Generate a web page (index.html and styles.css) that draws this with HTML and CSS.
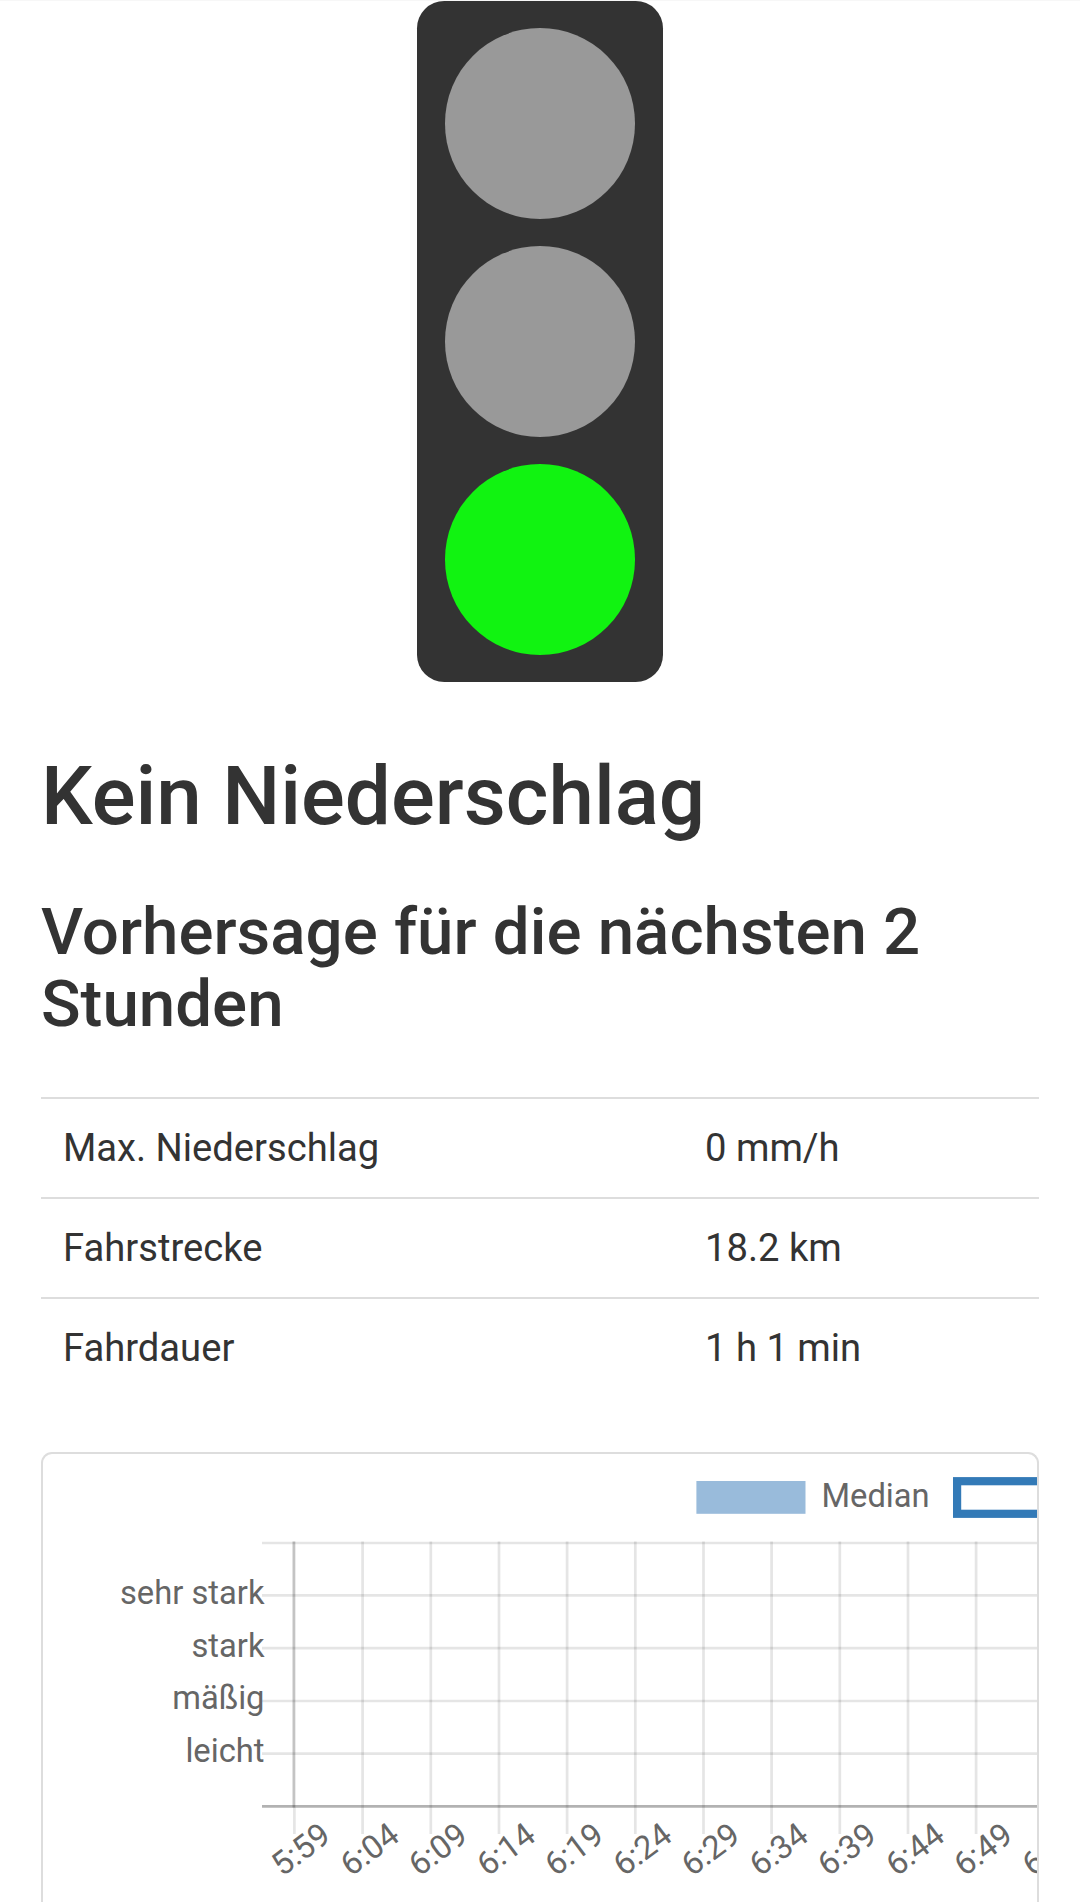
FILE: index.html
```
<!DOCTYPE html>
<html lang="de">
  <head>
    <meta charset="UTF-8" />
    <meta name="viewport" content="width=device-width, initial-scale=1.0" />
    <title>Kein Niederschlag</title>
    <link rel="stylesheet" href="styles.css">
  </head>
  <body>
    <div class="container">
      <div class="traffic-light">
        <div class="light"></div>
        <div class="light"></div>
        <div class="light green"></div>
      </div>

      <h1>Kein Niederschlag</h1>
      <h2>Vorhersage für die nächsten 2 Stunden</h2>

      <table class="table">
        <tr>
          <td class="label">Max. Niederschlag</td>
          <td>0 mm/h</td>
        </tr>
        <tr>
          <td class="label">Fahrstrecke</td>
          <td>18.2 km</td>
        </tr>
        <tr>
          <td class="label">Fahrdauer</td>
          <td>1 h 1 min</td>
        </tr>
      </table>

      <div class="chart-box">
        <svg class="chart" width="994" height="448" viewBox="43 1454 994 448">
          <!-- legend -->
          <rect class="median" x="696.4" y="1481" width="109.1" height="32.8" />
          <text x="821.5" y="1507">Median</text>
          <rect class="range" x="957.1" y="1481.2" width="109.1" height="32.6" />

          <!-- grid -->
          <path class="grid" d="M262 1543H1038M262 1595.4H1038M262 1648.2H1038M262 1701H1038M262 1753.6H1038" />
          <path class="grid" d="M294.4 1541.5V1834M362.6 1541.5V1834M430.8 1541.5V1834M499 1541.5V1834M567.1 1541.5V1834M635.3 1541.5V1834M703.5 1541.5V1834M771.6 1541.5V1834M839.8 1541.5V1834M908 1541.5V1834M976.1 1541.5V1834" />
          <path class="axis-y" d="M293.6 1541.5V1807.5" />
          <path class="axis-x" d="M262 1806.4H1038" />

          <!-- y axis -->
          <g class="y-labels">
            <text x="264.5" y="1604">sehr stark</text>
            <text x="264.5" y="1656.5">stark</text>
            <text x="264.5" y="1709">mäßig</text>
            <text x="264.5" y="1761.5">leicht</text>
          </g>

          <!-- x axis -->
          <g class="x-labels">
            <text transform="translate(300.4 1849) rotate(-37)" y="11.6">5:59</text>
            <text transform="translate(369.2 1849) rotate(-37)" y="11.6">6:04</text>
            <text transform="translate(437.4 1849) rotate(-37)" y="11.6">6:09</text>
            <text transform="translate(505.6 1849) rotate(-37)" y="11.6">6:14</text>
            <text transform="translate(573.7 1849) rotate(-37)" y="11.6">6:19</text>
            <text transform="translate(641.9 1849) rotate(-37)" y="11.6">6:24</text>
            <text transform="translate(710.1 1849) rotate(-37)" y="11.6">6:29</text>
            <text transform="translate(778.2 1849) rotate(-37)" y="11.6">6:34</text>
            <text transform="translate(846.4 1849) rotate(-37)" y="11.6">6:39</text>
            <text transform="translate(914.6 1849) rotate(-37)" y="11.6">6:44</text>
            <text transform="translate(982.7 1849) rotate(-37)" y="11.6">6:49</text>
            <text transform="translate(1050.9 1849) rotate(-37)" y="11.6">6:54</text>
          </g>
        </svg>
      </div>
    </div>
  </body>
</html>
```
FILE: styles.css
```
* {
  box-sizing: border-box;
}

body {
  margin: 0;
  border-top: 1px solid #f7f7f7;
  font-family: Roboto, Arial, sans-serif;
  font-size: 38.18px;
  line-height: 54.5px;
  color: #333;
  background-color: #fff;
}

.container {
  padding: 0 41px;
}

.traffic-light {
  display: flex;
  flex-direction: column;
  gap: 27.3px;
  width: 246px;
  height: 681px;
  margin: 0 auto;
  padding: 27.3px 28px;
  border-radius: 27.3px;
  background-color: #333;
}

.light {
  width: 190px;
  height: 190.9px;
  border-radius: 50%;
  background-color: #999;
}

.green {
  background-color: #11f311;
}

h1,
h2 {
  font-weight: 500;
}

h1 {
  margin: 69px 0 55px;
  font-size: 81.8px;
  line-height: 90px;
}

h2 {
  margin: 0 0 57px;
  font-size: 65.45px;
  line-height: 72px;
}

.table {
  width: 100%;
  margin: 0 0 55px;
  border-collapse: separate;
  border-spacing: 0;
  table-layout: fixed;
}

.table td {
  height: 100px;
  padding: 21px 22px;
  border-top: 2px solid #ddd;
}

.table .label {
  width: 642px;
}

.chart-box {
  height: 450px;
  border: 2px solid #ddd;
  border-bottom: 0;
  border-radius: 11px 11px 0 0;
  overflow: hidden;
}

.chart {
  display: block;
}

.chart text {
  font-size: 32.73px;
  fill: #666;
}

.median {
  fill: #99bbdb;
}

.range {
  fill: none;
  stroke: #337ab7;
  stroke-width: 8.2;
}

.grid,
.axis-x,
.axis-y {
  fill: none;
  stroke: rgba(0, 0, 0, 0.1);
  stroke-width: 2.73;
}

.axis-x {
  stroke: rgba(0, 0, 0, 0.3);
}

.axis-y {
  stroke: rgba(0, 0, 0, 0.15);
}

.y-labels {
  text-anchor: end;
}

.x-labels {
  text-anchor: middle;
}
```
